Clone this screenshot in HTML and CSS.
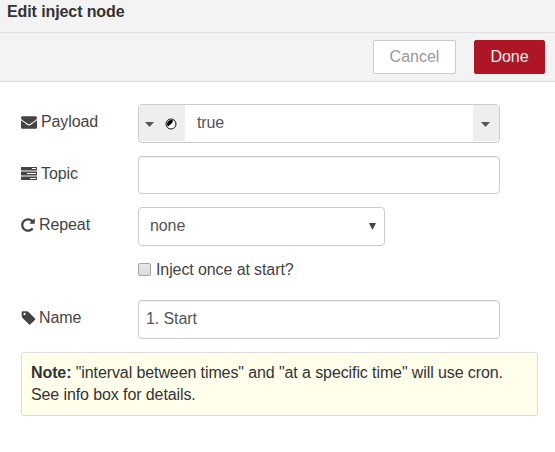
FILE: index.html
```
<!DOCTYPE html>
<html lang="en">
<head>
<meta charset="utf-8">
<title>Edit inject node</title>
<link rel="stylesheet" href="styles.css">
</head>
<body>
<header class="title">Edit inject node</header>
<div class="toolbar">
  <button class="btn">Cancel</button>
  <button class="btn primary">Done</button>
</div>
<form class="form">
  <div class="row payload">
    <label class="label"><svg class="icon" viewBox="0 0 1792 1792"><path d="M1792 710v794q0 66-47 113t-113 47h-1472q-66 0-113-47t-47-113v-794q44 49 101 87 362 246 497 345 57 42 92.5 65.5t94.5 48 110 24.5h2q51 0 110-24.5t94.5-48 92.5-65.5q170-123 498-345 57-39 100-87zm0-294q0 79-49 151t-122 123q-376 261-468 325-10 7-42.5 31t-54 38.5-52 32.5-57.5 27-50 9h-2q-23 0-50-9t-57.5-27-52-32.5-54-38.5-42.5-31q-91-64-262-182.5t-205-142.5q-62-42-117-115.5t-55-136.5q0-78 41.5-130t118.5-52h1472q65 0 112.5 47t47.5 113z"/></svg>Payload</label>
    <div class="field typed">
      <span class="type">
        <svg class="caret" viewBox="0 0 9 5"><path d="M0 0h9L4.5 5z"/></svg>
        <svg class="bool" viewBox="0 0 12 12"><circle cx="6" cy="6" r="5" fill="#fff" stroke="#111" stroke-width="1"/><path d="M3 8.500A4 4 0 0 1 8.500 2.800L6.300 5.800Z" fill="#000"/></svg>
      </span>
      <span class="value">true</span>
      <span class="drop"><svg class="caret" viewBox="0 0 9 5"><path d="M0 0h9L4.5 5z"/></svg></span>
    </div>
  </div>
  <div class="row topic">
    <label class="label"><svg class="icon" viewBox="0 0 16 16"><path fill-rule="evenodd" d="M.5 1h15q.5 0 .5.5v2.500q0 .5-.5.5H.5q-.5 0-.5-.5V1.500q0-.5.5-.5zM11 2v1h4V2zM.5 5.500h15q.5 0 .5.5v3q0 .5-.5.5H.5q-.5 0-.5-.5V6q0-.5.5-.5zM6 7v1h9V7zM.5 10.500h15q.5 0 .5.5v2.500q0 .5-.5.5H.5q-.5 0-.5-.5V11q0-.5.5-.5zM9 12v1h6v-1z"/></svg>Topic</label>
    <input class="field" type="text">
  </div>
  <div class="row repeat">
    <label class="label"><svg class="icon narrow" viewBox="128 0 1536 1792"><path d="M1664 256v448q0 26-19 45t-45 19h-448q-42 0-59-40-17-39 14-69l138-138q-148-137-349-137-104 0-198.500 40.500t-163.500 109.500-109.500 163.500-40.500 198.500 40.500 198.500 109.500 163.500 163.500 109.500 198.500 40.500q119 0 225-52t179-147q7-10 23-12 15 0 25 9l137 138q9 8 9.500 20.500t-7.500 22.500q-109 132-264 204.500t-327 72.500q-156 0-298-61t-245-164-164-245-61-298 61-298 164-245 245-164 298-61q147 0 284.500 55.500t244.500 156.500l130-129q29-31 70-14 39 17 39 59z"/></svg>Repeat</label>
    <div class="field select"><span>none</span><svg class="arrow" viewBox="0 0 7 7"><path d="M0 0h7L3.500 7z"/></svg></div>
  </div>
  <label class="once"><span class="check"></span>Inject once at start?</label>
  <div class="row name">
    <label class="label"><svg class="icon narrow" viewBox="0 0 1536 1792"><g transform="translate(-64 0)"><path d="M576 448q0-53-37.500-90.500t-90.500-37.500-90.500 37.500-37.500 90.500 37.500 90.500 90.500 37.500 90.500-37.500 37.500-90.500zm1067 576q0 53-37 90l-491 492q-39 37-91 37-53 0-90-37l-715-716q-38-37-64.500-101t-26.500-117v-416q0-52 38-90t90-38h416q53 0 117 26.500t102 64.500l715 714q37 39 37 91z"/></g></svg>Name</label>
    <input class="field" type="text" value="1. Start">
  </div>
  <div class="note"><b>Note:</b> "interval between times" and "at a specific time" will use cron. See info box for details.</div>
</form>
</body>
</html>
```
FILE: styles.css
```
* { box-sizing: border-box; }
body {
  margin: 0;
  background: #fff;
  color: #444;
  font: 16px/22px "Liberation Sans", Arial, sans-serif;
  letter-spacing: -.1px;
}
.title {
  height: 33px;
  padding: 1px 0 0 7px;
  background: #f3f3f3;
  border-bottom: 1px solid #ddd;
  color: #333;
  font-weight: bold;
}
.toolbar {
  display: flex;
  justify-content: flex-end;
  gap: 18px;
  height: 49px;
  padding: 7px 10px 0 0;
  background: #f3f3f3;
  border-bottom: 1px solid #ddd;
}
.btn {
  width: 83px;
  height: 34px;
  padding: 0;
  background: #fff;
  border: 1px solid #ccc;
  border-radius: 1px;
  color: #999;
  font: inherit;
}
.primary {
  width: 71px;
  background: #ad1625;
  border-color: #ad1625;
  border-radius: 2px;
  color: #eee;
}
.form {
  margin: 0;
  padding: 22px 17px 0 21px;
}
.row { display: flex; }
.payload { height: 52px; }
.topic { height: 51px; }
.repeat { height: 51px; }
.name { height: 52px; }
.label {
  width: 117px;
  display: flex;
  align-items: center;
  height: 22px;
  margin-top: 7px;
}
.icon {
  width: 16px;
  height: 16px;
  margin: 0 4px 1px 0;
  fill: #444;
}
.narrow { width: 14px; }
.field {
  width: 362px;
  height: 39px;
  margin: 0;
  padding: 0 7px 2px;
  background: #fff;
  border: 1px solid #ccc;
  border-radius: 4px;
  color: #555;
  font: inherit;
  letter-spacing: -.1px;
  outline: 0;
}
input.field { box-shadow: inset 0 1px 1px rgba(0, 0, 0, .075); }
.topic .field { height: 38px; }
.typed {
  display: flex;
  padding: 0 0 1px;
  overflow: hidden;
}
.type {
  display: flex;
  align-items: center;
  width: 46px;
  padding: 3px 0 0 6px;
  background: #eee;
}
.caret {
  width: 9px;
  height: 5px;
  fill: #555;
}
.bool {
  width: 12px;
  height: 12px;
  margin: 0 0 1px 11px;
}
.value {
  flex: 1;
  padding: 7px 0 0 12px;
}
.drop {
  display: flex;
  align-items: center;
  width: 26px;
  padding: 3px 0 0 8px;
  background: #eee;
}
.select {
  display: flex;
  align-items: center;
  justify-content: space-between;
  width: 247px;
  padding: 0 8px 1px 11px;
}
.arrow {
  width: 7px;
  height: 7px;
  fill: #444;
}
.once {
  display: flex;
  align-items: center;
  height: 22px;
  margin: 1px 0 19px 117px;
}
.check {
  width: 13px;
  height: 13px;
  margin: 0 5px 2px 0;
  background: linear-gradient(#e8e8e8, #dcdcdc);
  border: 1px solid #a5a5a5;
  border-radius: 2px;
}
.note {
  height: 64px;
  padding: 9px;
  background: #ffffec;
  border: 1px solid #ddd;
  border-radius: 2px;
  color: #333;
}
```
